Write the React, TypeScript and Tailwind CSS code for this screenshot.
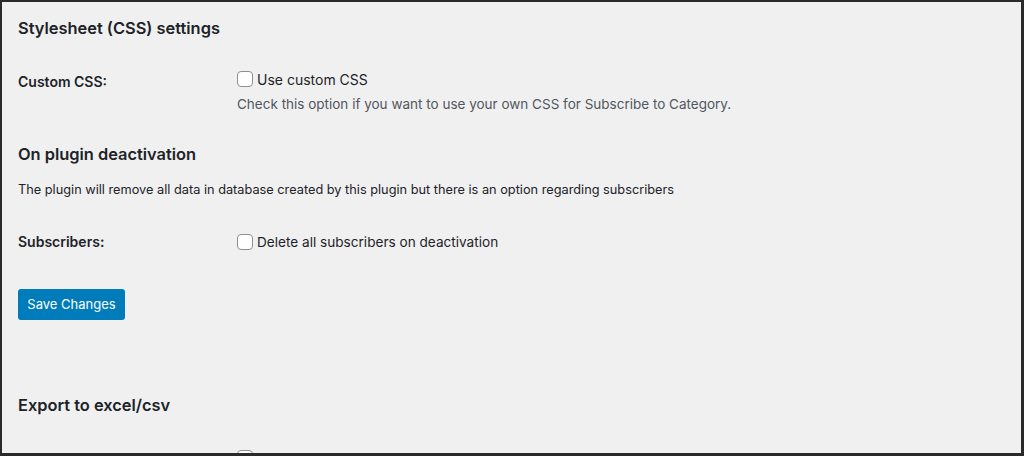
function Checkbox() {
  return <span className="block w-4 h-4 shrink-0 rounded-[4px] border border-[#8c8f94] bg-white" />;
}

function SettingRow({ label, option, description }: { label: string; option: string; description?: string }) {
  return (
    <div className="flex">
      <div className="w-[219px] shrink-0 pt-[1px] text-[14px] leading-5 font-semibold text-[#1d2327]">{label}</div>
      <div>
        <label className="flex items-center gap-1 h-4 text-[14px] text-[#1d2327]">
          <Checkbox />
          <span>{option}</span>
        </label>
        {description && (
          <p className="mt-[7px] text-[13.5px] leading-5 text-[#50575e]">{description}</p>
        )}
      </div>
    </div>
  );
}

export default function App() {
  return (
    <div
      className="w-[1024px] h-[456px] overflow-hidden bg-[#f0f0f1] border-l-2 border-t-2 border-r-[3px] border-b-[3px] border-[#2a2a2a] px-4"
      style={{ fontFamily: 'Inter, "Liberation Sans", sans-serif' }}
    >
      {/* Stylesheet */}
      <h2 className="mt-[15px] h-[22px] leading-[22px] text-[16.4px] font-semibold text-[#1d2327]">Stylesheet (CSS) settings</h2>
      <div className="mt-[32px]">
        <SettingRow
          label="Custom CSS:"
          option="Use custom CSS"
          description="Check this option if you want to use your own CSS for Subscribe to Category."
        />
      </div>

      {/* Deactivation */}
      <h2 className="mt-[29px] h-[22px] leading-[22px] text-[16.4px] font-semibold text-[#1d2327]">On plugin deactivation</h2>
      <p className="mt-[15px] text-[12.75px] leading-5 text-[#1d2327]">
        The plugin will remove all data in database created by this plugin but there is an option regarding subscribers
      </p>
      <div className="mt-[32px] flex items-center">
        <div className="w-[219px] shrink-0 text-[14px] leading-5 font-semibold text-[#1d2327]">Subscribers:</div>
        <label className="flex items-center gap-1 text-[13.6px] text-[#1d2327]">
          <Checkbox />
          <span>Delete all subscribers on deactivation</span>
        </label>
      </div>

      <button className="mt-[37px] h-[31px] w-[107px] rounded-[3px] bg-[#007cba] text-[13px] text-white">Save Changes</button>

      {/* Export */}
      <h2 className="mt-[74px] h-[22px] leading-[22px] text-[16.4px] font-semibold text-[#1d2327]">Export to excel/csv</h2>
      <div className="mt-[34px] flex">
        <div className="w-[219px] shrink-0" />
        <Checkbox />
      </div>
    </div>
  );
}
